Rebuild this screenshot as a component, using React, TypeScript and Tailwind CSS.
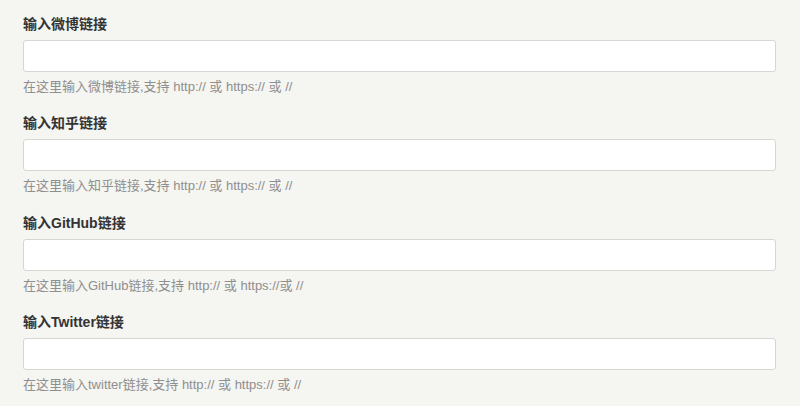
import React from "react";

const fields = [
  { label: "输入微博链接", help: "在这里输入微博链接,支持 http:// 或 https:// 或 //" },
  { label: "输入知乎链接", help: "在这里输入知乎链接,支持 http:// 或 https:// 或 //" },
  { label: "输入GitHub链接", help: "在这里输入GitHub链接,支持 http:// 或 https://或 //" },
  { label: "输入Twitter链接", help: "在这里输入twitter链接,支持 http:// 或 https:// 或 //" },
];

export default function App() {
  return (
    <div
      className="w-[800px] h-[406px] overflow-hidden bg-[#f5f5f1] px-[23px] pt-[14px]"
      style={{ fontFamily: '"Liberation Sans", "Noto Sans CJK SC", sans-serif' }}
    >
      {fields.map((f) => (
        <div key={f.label} className="mb-[17.33px]">
          <label className="block h-[20px] text-[14px] leading-[20px] font-bold text-[#333333]">
            {f.label}
          </label>
          <input
            type="text"
            className="mt-[6px] block w-[753px] h-[32px] rounded-[3px] border border-[#d6d6d3] bg-white px-2 outline-none"
          />
          <p className="mt-[6px] h-[18px] text-[13px] leading-[18px] text-[#8f8f8f]">{f.help}</p>
        </div>
      ))}
    </div>
  );
}
